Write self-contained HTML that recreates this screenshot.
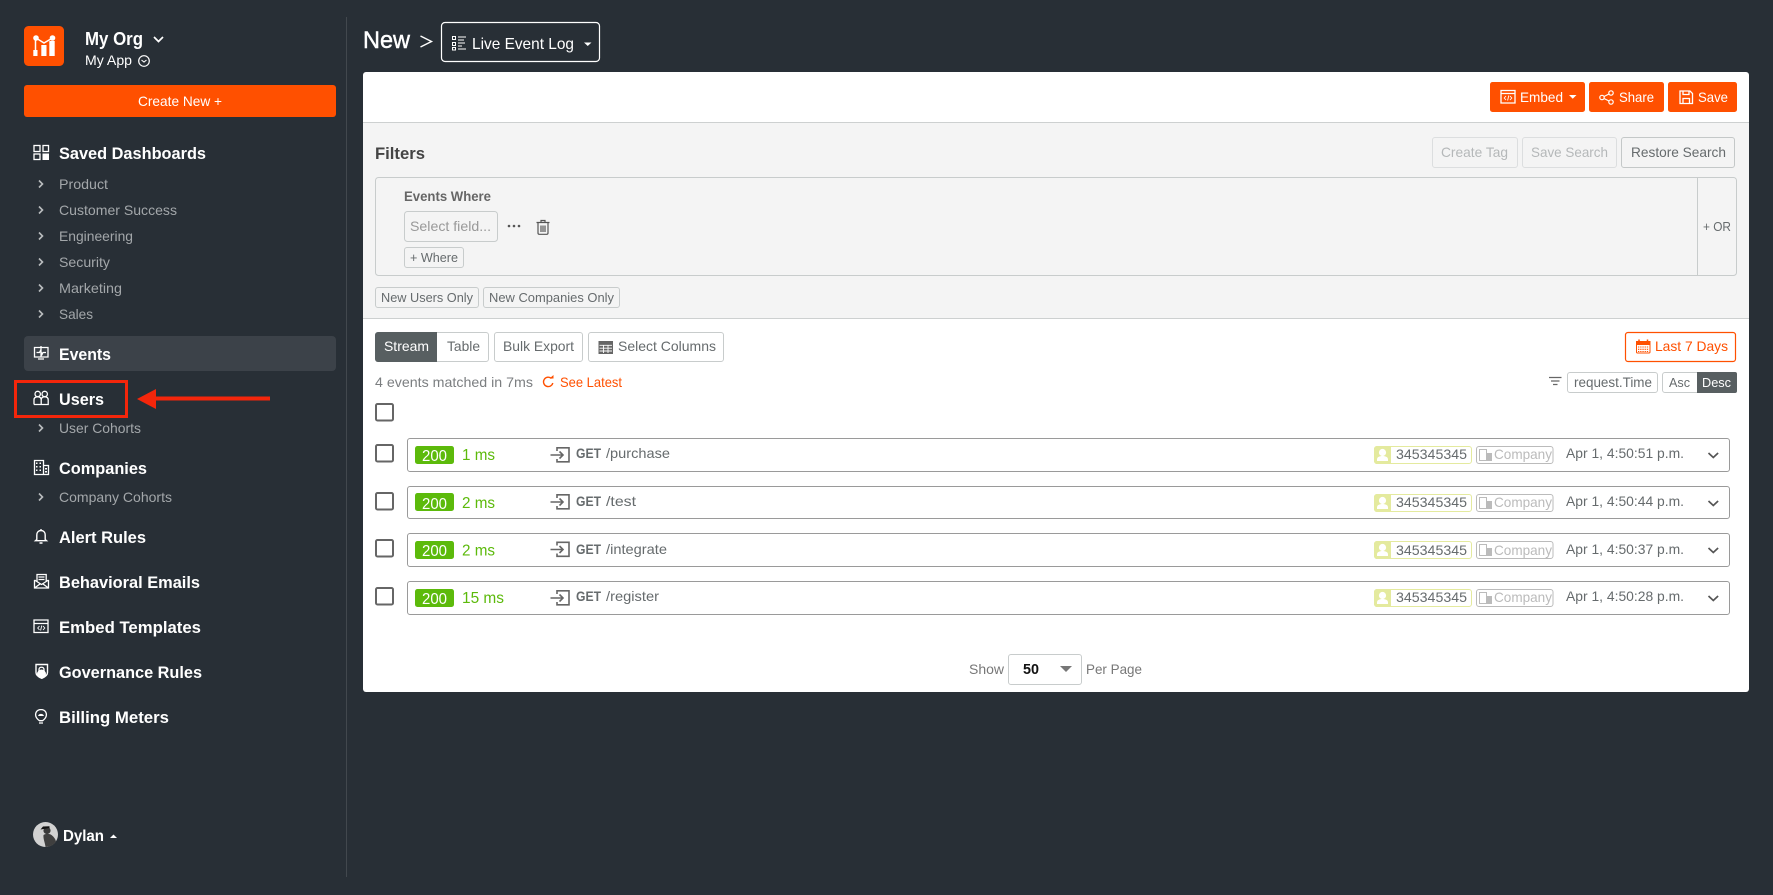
<!DOCTYPE html>
<html lang="en"><head><meta charset="utf-8"><title>Live Event Log</title>
<style>
html,body{margin:0;padding:0;background:#282f36;width:1773px;height:895px;overflow:hidden}
svg{display:block;font-family:"Liberation Sans",Arial,sans-serif}
.w{fill:#fff}.b{font-weight:700}
.h{fill:#fff;font-weight:700;font-size:17px}
.s{fill:#a3a7aa;font-size:14px}
.g{fill:#666b6d;font-size:14px}
.o{fill:#fff;font-size:14px}
.ln{fill:none;stroke:#fff;stroke-width:1.3}
.cv{fill:none;stroke:#b9bcbe;stroke-width:1.6}
.btn{fill:#fff;stroke:#c8cccc}
.f{fill:#f4f4f4;stroke:#c8cccc}
.gr{fill:#5cba0b;font-size:15.5px}
.rw{fill:#fff;stroke:#9a9a9a}
.cb{fill:none;stroke:#666;stroke-width:2}
</style></head><body>
<svg width="1773" height="895" viewBox="0 0 1773 895" xmlns="http://www.w3.org/2000/svg">
<defs>
<g id="chev"><path class="cv" d="M0 .5l3.500 3.500-3.500 3.500"/></g>
<g id="login" fill="none" stroke="#666" stroke-width="1.600"><path d="M0 8h12.500M9 4.500l3.500 3.500-3.500 3.500"/><path d="M6.500 4V.8h12v14h-12V12"/></g>
<g id="ut"><rect x=".5" y=".5" width="97" height="17" rx="2.500" fill="#fff" stroke="#e4ea9e"/><path d="M0 3a3 3 0 0 1 3-3h14v18H3a3 3 0 0 1-3-3z" fill="#e4ea9e"/><circle cx="8.500" cy="6.500" r="3.600" fill="#fff"/><path d="M3 15v-1.500c0-2.500 2.500-3.500 5.500-3.500s5.500 1 5.500 3.500V15z" fill="#fff"/></g>
<g id="ct"><rect x=".5" y=".5" width="76.500" height="17" rx="2.500" fill="#fff" stroke="#bbb"/><path d="M3.500 3.500h7v11h-7z" fill="none" stroke="#bbb"/><path d="M10 7h6v8h-6z" fill="#bbb"/></g>
</defs>

<!-- sidebar -->
<rect x="346" y="17" width="1" height="860" fill="#42484e"/>
<rect x="24" y="26" width="40" height="40" rx="4.500" fill="#ff5000"/>
<g fill="#fff"><rect x="33.300" y="50" width="4.200" height="6"/><rect x="41.300" y="45" width="5.200" height="11"/><rect x="49.300" y="41" width="5.400" height="15"/><circle cx="36" cy="38" r="2.800"/><circle cx="52.500" cy="38" r="2.800"/></g>
<path d="M35.500 38v12M36 38l8 5 8.500-5" stroke="#fff" stroke-width="1.500" fill="none"/>
<text x="85" y="45" class="w b" font-size="18" textLength="58" lengthAdjust="spacingAndGlyphs">My Org</text>
<path d="M154 37l4.500 4.500 4.500-4.500" fill="none" stroke="#fff" stroke-width="1.700"/>
<text x="85" y="65" class="o" textLength="47" lengthAdjust="spacingAndGlyphs">My App</text>
<circle cx="144" cy="61" r="5.300" fill="none" stroke="#fff" stroke-width="1.200"/><path d="M141.500 60l2.500 2 2.500-2" fill="none" stroke="#fff" stroke-width="1.100"/>
<rect x="24" y="85" width="312" height="32" rx="3" fill="#ff5000"/>
<text x="138" y="106" class="o" textLength="84" lengthAdjust="spacingAndGlyphs">Create New +</text>

<!-- saved dashboards icon -->
<g fill="none" stroke="#fff" stroke-width="1.300"><rect x="34" y="145.500" width="6" height="6"/><rect x="43" y="145.500" width="5.500" height="6"/><rect x="34" y="154" width="6" height="5.500"/></g><rect x="42.500" y="153.500" width="6.500" height="6.500" fill="#fff"/>
<text x="59" y="159" class="h" textLength="147" lengthAdjust="spacingAndGlyphs">Saved Dashboards</text>
<use href="#chev" x="39" y="180"/><text x="59" y="189" class="s" textLength="49" lengthAdjust="spacingAndGlyphs">Product</text>
<use href="#chev" x="39" y="206"/><text x="59" y="215" class="s" textLength="118" lengthAdjust="spacingAndGlyphs">Customer Success</text>
<use href="#chev" x="39" y="232"/><text x="59" y="241" class="s" textLength="74" lengthAdjust="spacingAndGlyphs">Engineering</text>
<use href="#chev" x="39" y="258"/><text x="59" y="267" class="s" textLength="51" lengthAdjust="spacingAndGlyphs">Security</text>
<use href="#chev" x="39" y="284"/><text x="59" y="293" class="s" textLength="63" lengthAdjust="spacingAndGlyphs">Marketing</text>
<use href="#chev" x="39" y="310"/><text x="59" y="319" class="s" textLength="34" lengthAdjust="spacingAndGlyphs">Sales</text>

<rect x="24" y="336" width="312" height="35" rx="4" fill="#3c4249"/>
<path class="ln" d="M34.500 347.500h13.500v9.500h-13.500zM41 346v11M36.500 352.500h3l1-2 1.500 4 1-2h3M38 359h6"/>
<text x="59" y="360" class="h" textLength="52" lengthAdjust="spacingAndGlyphs">Events</text>

<!-- users -->
<circle class="ln" cx="37.700" cy="394" r="2.700"/><circle class="ln" cx="44.700" cy="394" r="2.700"/><path class="ln" d="M34 404.500v-4.500c0-2.200 1.500-3.200 3.700-3.200s3.500 1 3.500 3.200v4.500M41.200 404.500v-4.500c0-2.200 1.500-3.200 3.500-3.200s3.500 1 3.500 3.200v4.500zM34 404.500h7.200"/>
<text x="59" y="405" class="h" textLength="45" lengthAdjust="spacingAndGlyphs">Users</text>
<rect x="15.500" y="381.500" width="111" height="35" fill="none" stroke="#f4260b" stroke-width="3"/>
<path d="M137 399l19-10v7.500h114v4h-114v8.500z" fill="#f4260b"/>
<use href="#chev" x="39" y="424"/><text x="59" y="433" class="s" textLength="82" lengthAdjust="spacingAndGlyphs">User Cohorts</text>

<!-- companies -->
<path class="ln" d="M34.500 460.500h9v14h-9zM43.500 465.500h5v9h-5z"/><g fill="#fff"><rect x="36" y="462.500" width="1.500" height="1.500"/><rect x="39.500" y="462.500" width="1.500" height="1.500"/><rect x="36" y="466" width="1.500" height="1.500"/><rect x="39.500" y="466" width="1.500" height="1.500"/><rect x="36" y="469.500" width="1.500" height="1.500"/><rect x="39.500" y="469.500" width="1.500" height="1.500"/><rect x="45" y="468" width="2" height="1.500"/><rect x="45" y="471" width="2" height="1.500"/></g>
<text x="59" y="474" class="h" textLength="88" lengthAdjust="spacingAndGlyphs">Companies</text>
<use href="#chev" x="39" y="493"/><text x="59" y="502" class="s" textLength="113" lengthAdjust="spacingAndGlyphs">Company Cohorts</text>

<!-- alert -->
<path d="M36.800 539.500v-4.500c0-2.800 1.800-4.500 4.200-4.500s4.200 1.700 4.200 4.500v4.500l1.300 1.200h-11zM39.500 543h3M41 529v1.500" fill="none" stroke="#fff" stroke-width="1.400"/>
<text x="59" y="543" class="h" textLength="87" lengthAdjust="spacingAndGlyphs">Alert Rules</text>
<!-- email -->
<path class="ln" d="M34.500 580v8h14v-8M34.500 580l7 4.500 7-4.500M34.500 588l5.500-4M48.500 588l-5.500-4M37 581.500v-7h9.200v7M38.500 577h6M38.500 579.500h6"/>
<text x="59" y="588" class="h" textLength="141" lengthAdjust="spacingAndGlyphs">Behavioral Emails</text>
<!-- embed -->
<path class="ln" d="M34 620h14v12.500h-14zM34 623.500h14"/><path d="M39.500 626l-1.800 2 1.800 2M43 626l1.800 2-1.800 2M41.800 625.500l-1.200 5" fill="none" stroke="#fff" stroke-width=".9"/>
<text x="59" y="633" class="h" textLength="142" lengthAdjust="spacingAndGlyphs">Embed Templates</text>
<!-- governance -->
<g transform="translate(0,-1)"><path d="M36 665.500h11.500v8c0 2.500-2.500 4.500-5.700 5.800-3.300-1.300-5.800-3.300-5.800-5.800z" fill="none" stroke="#fff" stroke-width="1.400"/><circle cx="41.500" cy="675" r="4.500" fill="#fff"/><path d="M39 672v-1.500c0-3 5-3 5 0v1.500" fill="none" stroke="#fff" stroke-width="1.300"/></g>
<text x="59" y="678" class="h" textLength="143" lengthAdjust="spacingAndGlyphs">Governance Rules</text>
<!-- billing -->
<g transform="translate(0,-2)"><path d="M41 711.500c-3.500 0-5.400 2.500-5.400 5.200 0 2.400 1.900 4.600 3.800 6h3.200c1.900-1.400 3.800-3.600 3.800-6 0-2.700-1.900-5.200-5.400-5.200zM39 725h4" fill="none" stroke="#fff" stroke-width="1.300"/><path d="M38 718a3.200 3.200 0 0 1 6 0z" fill="#fff"/></g>
<text x="59" y="723" class="h" textLength="110" lengthAdjust="spacingAndGlyphs">Billing Meters</text>

<!-- user -->
<circle cx="45.500" cy="834.500" r="12.500" fill="#d2d2d2"/>
<circle cx="47" cy="830.500" r="3.600" fill="#3a3a3a"/><path d="M40.500 829.500l9-1.500 0-1.800-6.500.3z" fill="#111"/>
<path d="M43.500 835c2-1.500 6-1.500 8 0 2.500 2 4 4 4.500 6.500a12.500 12.500 0 0 1-10.500 5.500c-.3-4-2.500-8-2-12z" fill="#3f3f3f"/>
<text x="63" y="841" class="w b" font-size="15.500" textLength="41" lengthAdjust="spacingAndGlyphs">Dylan</text>
<path d="M110 838l3.500-3.500 3.500 3.500z" fill="#fff"/>

<!-- header -->
<text x="363" y="48" class="w b" font-size="24.500" textLength="47" lengthAdjust="spacingAndGlyphs" style="font-weight:400;stroke:#fff;stroke-width:.45">New</text>
<path d="M420.500 36l11 5.500-11 5.500" fill="none" stroke="#fff" stroke-width="1.400"/>
<rect x="441.500" y="22.500" width="158" height="39" rx="3.500" fill="none" stroke="#fff" stroke-width="1.200"/>
<g fill="none" stroke="#fff" stroke-width="1"><rect x="452.500" y="36.500" width="3" height="3"/><rect x="452.500" y="42.500" width="3" height="3"/><rect x="452.500" y="47.500" width="3" height="2.500"/><path d="M458 37h8M458 40h6M458 43h7M458 46h4M458 49h8"/></g>
<text x="472" y="49" class="w" font-size="16" textLength="102" lengthAdjust="spacingAndGlyphs">Live Event Log</text>
<path d="M584 42.500h7.500l-3.750 3.500z" fill="#fff"/>

<!-- card -->
<rect x="363" y="72" width="1386" height="620" rx="3" fill="#fff"/>
<rect x="363" y="122" width="1386" height="196" fill="#f4f4f4"/>
<rect x="363" y="122" width="1386" height="1" fill="#cdd0d0"/>
<rect x="363" y="318" width="1386" height="1" fill="#cdd0d0"/>

<!-- orange buttons -->
<rect x="1490" y="82" width="95" height="30" rx="2.500" fill="#ff5000"/>
<rect x="1589" y="82" width="75" height="30" rx="2.500" fill="#ff5000"/>
<rect x="1668" y="82" width="69" height="30" rx="2.500" fill="#ff5000"/>
<path class="ln" d="M1501 90.500h14v12.500h-14zM1501 93.500h14"/><path d="M1506 96l-1.800 2 1.800 2M1510 96l1.800 2-1.800 2M1508.800 95.500l-1.200 5" fill="none" stroke="#fff" stroke-width=".9"/>
<text x="1520" y="102" class="o" textLength="43" lengthAdjust="spacingAndGlyphs">Embed</text>
<path d="M1569 95h7.500l-3.750 3.800z" fill="#fff"/>
<g fill="none" stroke="#fff" stroke-width="1.200"><circle cx="1602" cy="97.500" r="2.200"/><circle cx="1611" cy="93" r="2.200"/><circle cx="1611" cy="102" r="2.200"/><path d="M1604 96.500l5-2.500M1604 98.500l5 2.500"/></g>
<text x="1619" y="102" class="o" textLength="35" lengthAdjust="spacingAndGlyphs">Share</text>
<g fill="none" stroke="#fff" stroke-width="1.300"><path d="M1680 91h10l2.500 2.500v10h-12.500z"/><path d="M1683 91v3.500h6V91M1683 103.500v-5h6.500v5"/></g>
<text x="1698" y="102" class="o" textLength="30" lengthAdjust="spacingAndGlyphs">Save</text>

<!-- filters -->
<text x="375" y="159" class="b" fill="#444" font-size="17" textLength="50" lengthAdjust="spacingAndGlyphs">Filters</text>
<rect x="1432.500" y="137.500" width="85" height="30" rx="2.500" fill="#f4f4f4" stroke="#dcdedf"/>
<text x="1441" y="157" fill="#b5b8b9" font-size="14" textLength="67" lengthAdjust="spacingAndGlyphs">Create Tag</text>
<rect x="1522.500" y="137.500" width="94" height="30" rx="2.500" fill="#f4f4f4" stroke="#dcdedf"/>
<text x="1531" y="157" fill="#b5b8b9" font-size="14" textLength="77" lengthAdjust="spacingAndGlyphs">Save Search</text>
<rect x="1621.500" y="137.500" width="113" height="30" rx="2.500" fill="#f4f4f4" stroke="#c4c8c8"/>
<text x="1631" y="157" class="g" textLength="95" lengthAdjust="spacingAndGlyphs">Restore Search</text>
<rect x="375.500" y="177.500" width="1361" height="98" rx="3" class="f"/>
<rect x="1697" y="178" width="1" height="97" fill="#c8cccc"/>
<text x="1703" y="231" class="g" style="font-size:13px" textLength="28" lengthAdjust="spacingAndGlyphs">+ OR</text>
<text x="404" y="201" class="b" fill="#666" font-size="14" textLength="87" lengthAdjust="spacingAndGlyphs">Events Where</text>
<rect x="404.500" y="211.500" width="93" height="30" rx="3" class="f"/>
<text x="410" y="231" fill="#999" font-size="14" textLength="81" lengthAdjust="spacingAndGlyphs">Select field...</text>
<g fill="#555"><circle cx="509" cy="226" r="1.300"/><circle cx="514" cy="226" r="1.300"/><circle cx="519" cy="226" r="1.300"/></g>
<path d="M536.500 222.500h13M541 222v-1.500h4v1.500M538 223v10c0 .8.500 1.300 1.200 1.300h7.600c.7 0 1.200-.5 1.200-1.300v-10M541 225.500v6.500M543 225.500v6.500M545 225.500v6.500" fill="none" stroke="#555" stroke-width="1.200"/>
<rect x="404.500" y="247.500" width="59" height="20" rx="2.500" class="f"/>
<text x="410" y="262" class="g" style="font-size:13px" textLength="48" lengthAdjust="spacingAndGlyphs">+ Where</text>
<rect x="375.500" y="287.500" width="103" height="20" rx="2.500" class="f"/>
<text x="381" y="302" class="g" style="font-size:13px" textLength="92" lengthAdjust="spacingAndGlyphs">New Users Only</text>
<rect x="483.500" y="287.500" width="136" height="20" rx="2.500" class="f"/>
<text x="489" y="302" class="g" style="font-size:13px" textLength="125" lengthAdjust="spacingAndGlyphs">New Companies Only</text>

<!-- toolbar -->
<rect x="375.500" y="332.500" width="113" height="29" rx="2.500" class="btn"/>
<path d="M375 335a3 3 0 0 1 3-3h59v30h-59a3 3 0 0 1-3-3z" fill="#585f61"/>
<text x="384" y="351" class="o" textLength="45" lengthAdjust="spacingAndGlyphs">Stream</text>
<text x="447" y="351" class="g" textLength="33" lengthAdjust="spacingAndGlyphs">Table</text>
<rect x="494.500" y="332.500" width="88" height="29" rx="2.500" class="btn"/>
<text x="503" y="351" class="g" textLength="71" lengthAdjust="spacingAndGlyphs">Bulk Export</text>
<rect x="588.500" y="332.500" width="135" height="29" rx="2.500" class="btn"/>
<rect x="598.500" y="341" width="14.500" height="13" fill="#666"/><path d="M599.500 345.300h12.500M599.500 348.200h12.500M599.500 351h12.500M603.500 345v8M608 345v8" fill="none" stroke="#fff" stroke-width=".9"/>
<text x="618" y="351" class="g" textLength="98" lengthAdjust="spacingAndGlyphs">Select Columns</text>
<text x="375" y="387" fill="#7b7e80" font-size="14" textLength="158" lengthAdjust="spacingAndGlyphs">4 events matched in 7ms</text>
<path d="M551.500 378.500a4.700 4.700 0 1 0 1.300 4.500" fill="none" stroke="#ff5000" stroke-width="1.400"/><path d="M549.500 378.500h4v-3.500z" fill="#ff5000"/>
<text x="560" y="387" fill="#ff5000" font-size="14" textLength="62" lengthAdjust="spacingAndGlyphs">See Latest</text>
<rect x="1625.500" y="332.500" width="110" height="29" rx="2.500" fill="#fff" stroke="#ff5000" stroke-width="1.200"/>
<rect x="1636.500" y="341.500" width="13.500" height="11.500" rx="1" fill="#fff" stroke="#ff5000"/><rect x="1636" y="341" width="14.500" height="4" fill="#ff5000"/><path d="M1639 339.500v2M1647.500 339.500v2" stroke="#ff5000" stroke-width="1.500"/><path d="M1638 347h10.500M1638 349.300h10.500M1638 351.500h10.500" stroke="#ff5000" stroke-width="1.100" stroke-dasharray="1.300 .9"/>
<text x="1655" y="351" fill="#ff5000" font-size="14" textLength="73" lengthAdjust="spacingAndGlyphs">Last 7 Days</text>
<path d="M1549 377.500h12.500M1551 381h8.500M1553 384.500h4.500" fill="none" stroke="#666" stroke-width="1.300"/>
<rect x="1567.500" y="372.500" width="90" height="20" rx="2.500" class="btn"/>
<text x="1574" y="387" class="g" style="font-size:13.500px" textLength="78" lengthAdjust="spacingAndGlyphs">request.Time</text>
<rect x="1662.500" y="372.500" width="74" height="20" rx="2.500" class="btn"/>
<text x="1669" y="387" class="g" style="font-size:13px" textLength="21" lengthAdjust="spacingAndGlyphs">Asc</text>
<path d="M1697 372h38a2 2 0 0 1 2 2v17a2 2 0 0 1-2 2h-38z" fill="#585f61"/>
<text x="1702" y="387" class="o" style="font-size:13px" textLength="29" lengthAdjust="spacingAndGlyphs">Desc</text>

<rect x="376" y="404" width="17" height="16.500" rx="1.500" class="cb"/>
<!-- rows -->
<rect x="376" y="445" width="17" height="16.500" rx="1.500" class="cb"/>
<rect x="407.500" y="438.500" width="1322" height="33" rx="2.500" class="rw"/>
<rect x="415" y="446" width="39" height="18" rx="2.500" fill="#5cba0b"/>
<text x="422" y="461" class="w" font-size="15.500" textLength="25" lengthAdjust="spacingAndGlyphs">200</text>
<text x="462" y="460" class="gr" textLength="33" lengthAdjust="spacingAndGlyphs">1 ms</text>
<use href="#login" x="550.500" y="447"/>
<text x="576" y="458" class="g b" textLength="25" lengthAdjust="spacingAndGlyphs">GET</text>
<text x="606" y="458" class="g" textLength="64" lengthAdjust="spacingAndGlyphs">/purchase</text>
<use href="#ut" x="1374" y="446"/><text x="1396" y="459" class="g" textLength="71" lengthAdjust="spacingAndGlyphs">345345345</text>
<use href="#ct" x="1476" y="446"/><text x="1494" y="459" fill="#bbb" font-size="14" textLength="58" lengthAdjust="spacingAndGlyphs">Company</text>
<text x="1566" y="458" class="g" textLength="118" lengthAdjust="spacingAndGlyphs">Apr 1, 4:50:51 p.m.</text>
<path d="M1708.500 453l4.800 4.500 4.800-4.500" fill="none" stroke="#555" stroke-width="1.700"/>

<rect x="376" y="493" width="17" height="16.500" rx="1.500" class="cb"/>
<rect x="407.500" y="486.500" width="1322" height="32" rx="2.500" class="rw"/>
<rect x="415" y="493" width="39" height="18" rx="2.500" fill="#5cba0b"/>
<text x="422" y="509" class="w" font-size="15.500" textLength="25" lengthAdjust="spacingAndGlyphs">200</text>
<text x="462" y="508" class="gr" textLength="33" lengthAdjust="spacingAndGlyphs">2 ms</text>
<use href="#login" x="550.500" y="494"/>
<text x="576" y="506" class="g b" textLength="25" lengthAdjust="spacingAndGlyphs">GET</text>
<text x="606" y="506" class="g" textLength="30" lengthAdjust="spacingAndGlyphs">/test</text>
<use href="#ut" x="1374" y="494"/><text x="1396" y="507" class="g" textLength="71" lengthAdjust="spacingAndGlyphs">345345345</text>
<use href="#ct" x="1476" y="494"/><text x="1494" y="507" fill="#bbb" font-size="14" textLength="58" lengthAdjust="spacingAndGlyphs">Company</text>
<text x="1566" y="506" class="g" textLength="118" lengthAdjust="spacingAndGlyphs">Apr 1, 4:50:44 p.m.</text>
<path d="M1708.500 501l4.800 4.500 4.800-4.500" fill="none" stroke="#555" stroke-width="1.700"/>

<rect x="376" y="540" width="17" height="16.500" rx="1.500" class="cb"/>
<rect x="407.500" y="533.500" width="1322" height="33" rx="2.500" class="rw"/>
<rect x="415" y="541" width="39" height="18" rx="2.500" fill="#5cba0b"/>
<text x="422" y="556" class="w" font-size="15.500" textLength="25" lengthAdjust="spacingAndGlyphs">200</text>
<text x="462" y="555.500" class="gr" textLength="33" lengthAdjust="spacingAndGlyphs">2 ms</text>
<use href="#login" x="550.500" y="541.500"/>
<text x="576" y="554" class="g b" textLength="25" lengthAdjust="spacingAndGlyphs">GET</text>
<text x="606" y="554" class="g" textLength="61" lengthAdjust="spacingAndGlyphs">/integrate</text>
<use href="#ut" x="1374" y="541"/><text x="1396" y="555" class="g" textLength="71" lengthAdjust="spacingAndGlyphs">345345345</text>
<use href="#ct" x="1476" y="541"/><text x="1494" y="555" fill="#bbb" font-size="14" textLength="58" lengthAdjust="spacingAndGlyphs">Company</text>
<text x="1566" y="554" class="g" textLength="118" lengthAdjust="spacingAndGlyphs">Apr 1, 4:50:37 p.m.</text>
<path d="M1708.500 548l4.800 4.500 4.800-4.500" fill="none" stroke="#555" stroke-width="1.700"/>

<rect x="376" y="588" width="17" height="16.500" rx="1.500" class="cb"/>
<rect x="407.500" y="581.500" width="1322" height="33" rx="2.500" class="rw"/>
<rect x="415" y="589" width="39" height="18" rx="2.500" fill="#5cba0b"/>
<text x="422" y="604" class="w" font-size="15.500" textLength="25" lengthAdjust="spacingAndGlyphs">200</text>
<text x="462" y="603" class="gr" textLength="42" lengthAdjust="spacingAndGlyphs">15 ms</text>
<use href="#login" x="550.500" y="590"/>
<text x="576" y="601" class="g b" textLength="25" lengthAdjust="spacingAndGlyphs">GET</text>
<text x="606" y="601" class="g" textLength="53" lengthAdjust="spacingAndGlyphs">/register</text>
<use href="#ut" x="1374" y="589"/><text x="1396" y="602" class="g" textLength="71" lengthAdjust="spacingAndGlyphs">345345345</text>
<use href="#ct" x="1476" y="589"/><text x="1494" y="602" fill="#bbb" font-size="14" textLength="58" lengthAdjust="spacingAndGlyphs">Company</text>
<text x="1566" y="601" class="g" textLength="118" lengthAdjust="spacingAndGlyphs">Apr 1, 4:50:28 p.m.</text>
<path d="M1708.500 596l4.800 4.500 4.800-4.500" fill="none" stroke="#555" stroke-width="1.700"/>

<!-- pagination -->
<text x="969" y="674" fill="#777" font-size="14" textLength="35" lengthAdjust="spacingAndGlyphs">Show</text>
<rect x="1008.500" y="654.500" width="73" height="30" rx="2.500" class="btn"/>
<text x="1023" y="674" class="b" fill="#111" font-size="14.500" textLength="16" lengthAdjust="spacingAndGlyphs">50</text>
<path d="M1060 666h12l-6 6z" fill="#777"/>
<text x="1086" y="674" fill="#777" font-size="14" textLength="56" lengthAdjust="spacingAndGlyphs">Per Page</text>
</svg>
</body></html>
